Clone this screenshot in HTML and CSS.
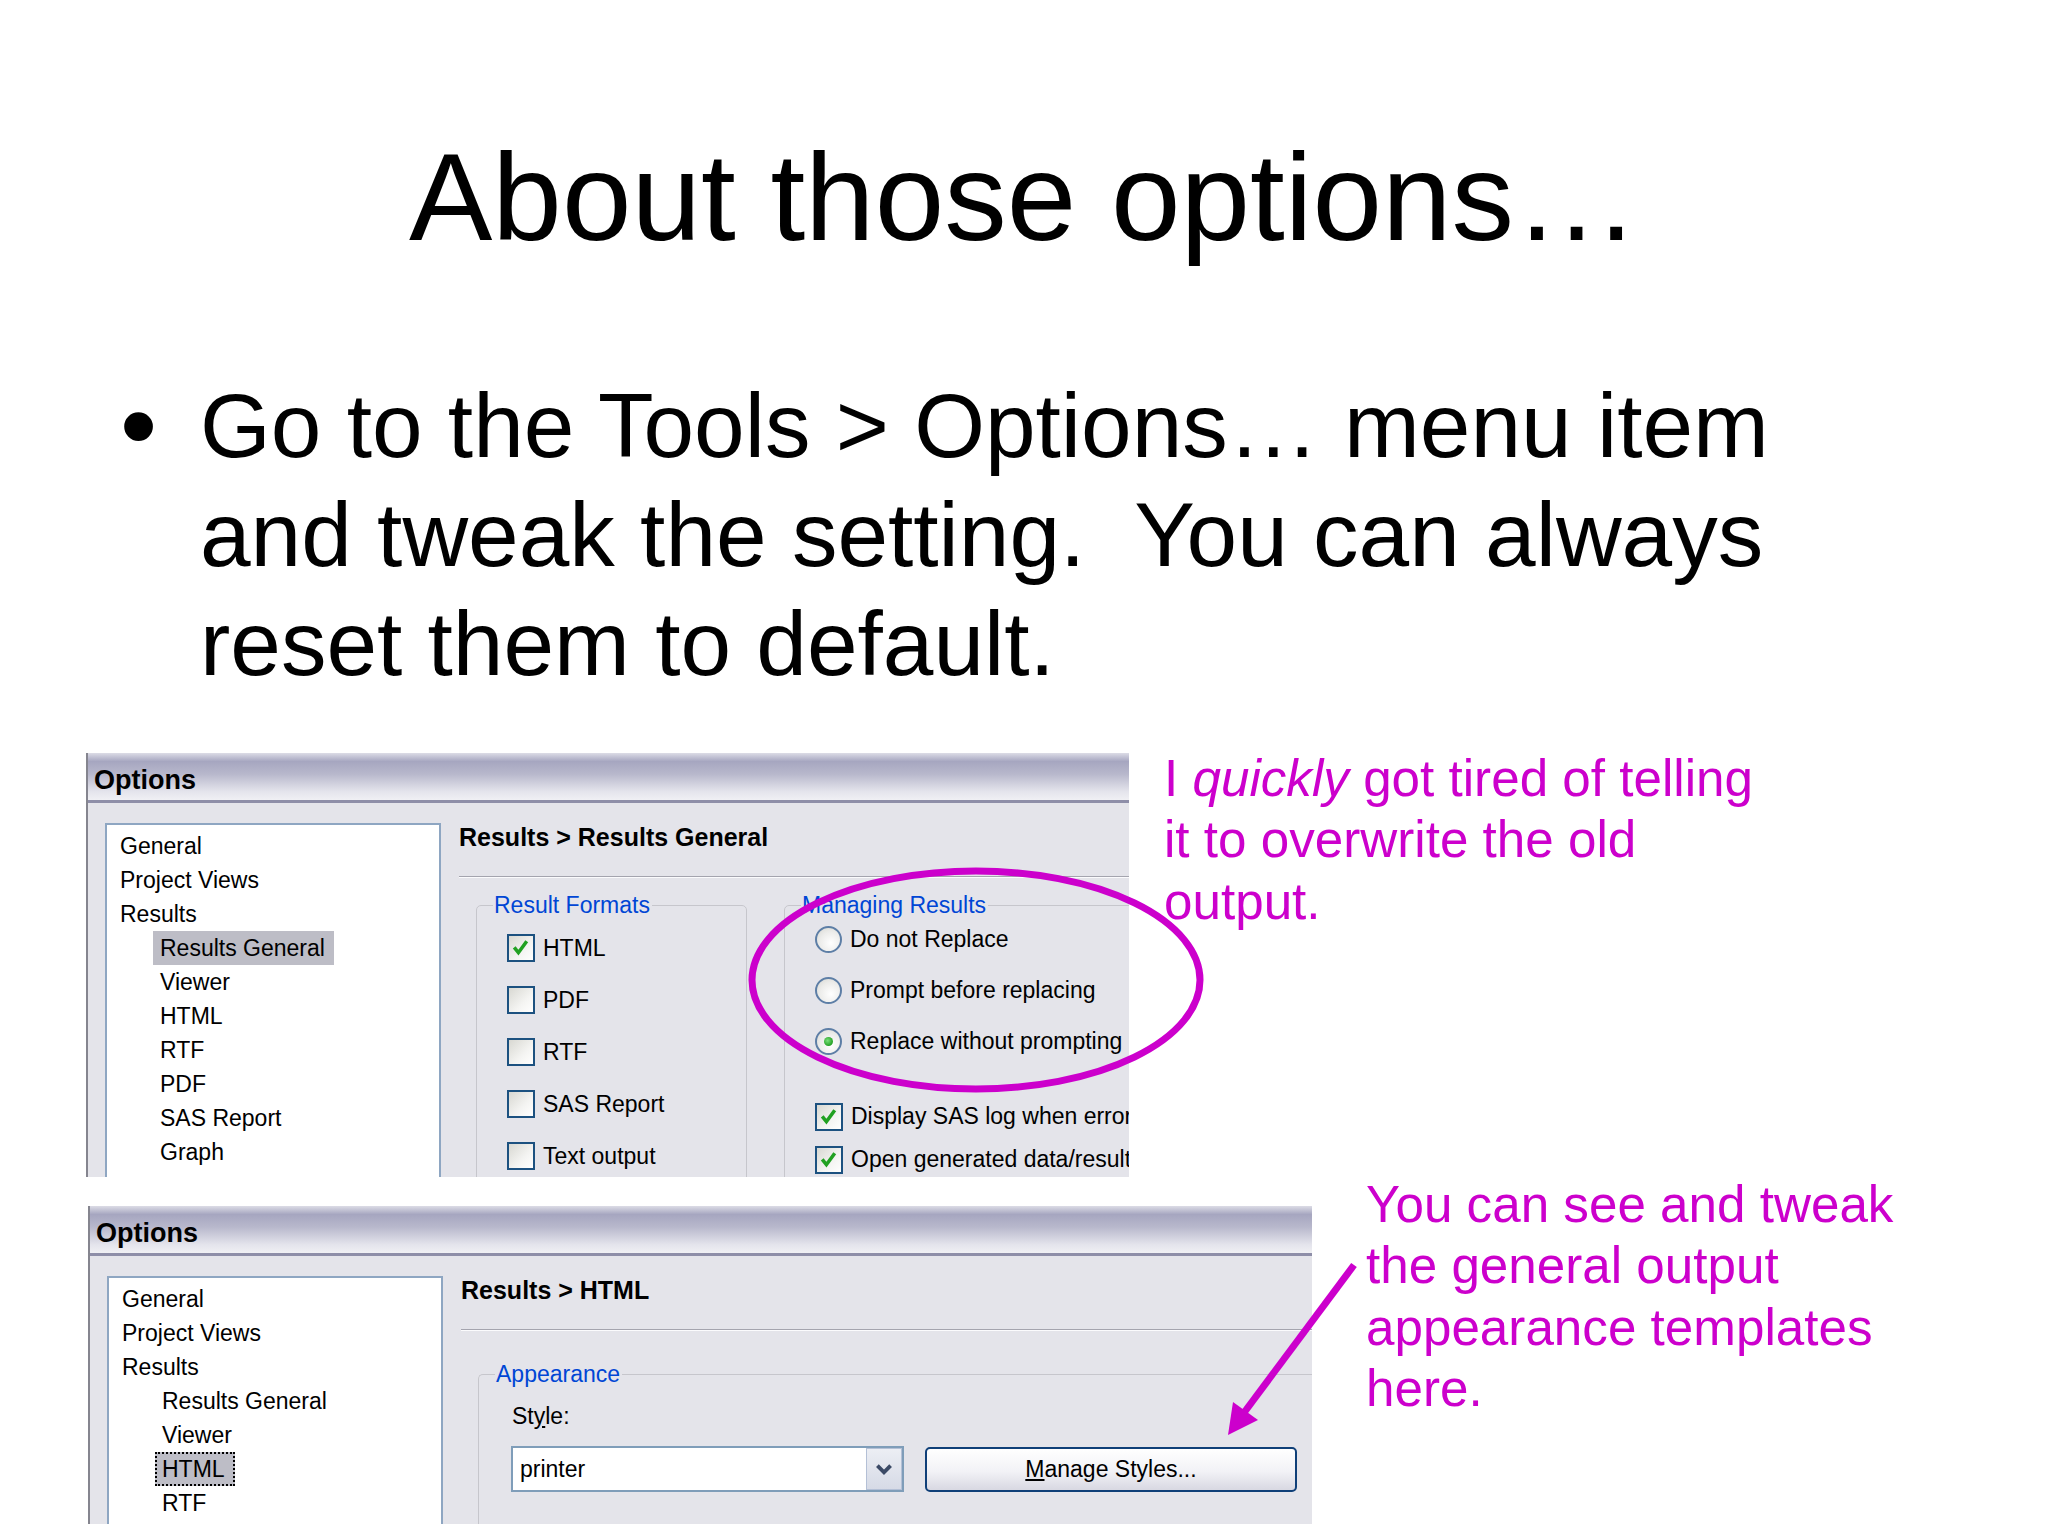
FILE: index.html
```html
<!DOCTYPE html>
<html lang="en">
<head>
  <meta charset="UTF-8" />
  <title>About those options…</title>
  <link rel="stylesheet" href="styles.css">
</head>
<body>

  <div class="slide">
    <h1 class="title">About those options…</h1>

    <ul class="bullets">
      <li><span class="dot">•</span><span>Go to the Tools &gt; Options… menu item<br>and tweak the setting.&nbsp; You can always<br>reset them to default.</span></li>
    </ul>

    <!-- first screenshot: Results General -->
    <div class="shot-row row-one">
      <div class="dialog dlg-general">
        <div class="titlebar">Options</div>
        <div class="dlg-body">
          <div class="tree">
            <div class="tree-item">General</div>
            <div class="tree-item">Project Views</div>
            <div class="tree-item">Results</div>
            <div class="tree-item sub"><span class="sel">Results General</span></div>
            <div class="tree-item sub">Viewer</div>
            <div class="tree-item sub">HTML</div>
            <div class="tree-item sub">RTF</div>
            <div class="tree-item sub">PDF</div>
            <div class="tree-item sub">SAS Report</div>
            <div class="tree-item sub">Graph</div>
          </div>
          <div class="pane">
            <div class="pane-head">Results &gt; Results General</div>
            <div class="sep"></div>
            <div class="groups">
              <fieldset class="group formats">
                <legend>Result Formats</legend>
                <div class="opt-list">
                  <div class="opt"><span class="check"><svg viewBox="0 0 23 23"><polyline points="5,11 9,16 17,5" /></svg></span>HTML</div>
                  <div class="opt"><span class="check"></span>PDF</div>
                  <div class="opt"><span class="check"></span>RTF</div>
                  <div class="opt"><span class="check"></span>SAS Report</div>
                  <div class="opt"><span class="check"></span>Text output</div>
                </div>
              </fieldset>
              <fieldset class="group managing">
                <legend>Managing Results</legend>
                <div class="radio-list">
                  <div class="opt"><span class="radio"></span>Do not Replace</div>
                  <div class="opt"><span class="radio"></span>Prompt before replacing</div>
                  <div class="opt"><span class="radio on"></span>Replace without prompting</div>
                </div>
                <div class="check-list">
                  <div class="opt"><span class="check"><svg viewBox="0 0 23 23"><polyline points="5,11 9,16 17,5" /></svg></span>Display SAS log when errors occur</div>
                  <div class="opt"><span class="check"><svg viewBox="0 0 23 23"><polyline points="5,11 9,16 17,5" /></svg></span>Open generated data/results</div>
                </div>
              </fieldset>
            </div>
          </div>
        </div>
      </div>
      <p class="note note-one">I <em>quickly</em> got tired of telling<br>it to overwrite the old<br>output.</p>
    </div>

    <!-- second screenshot: Results > HTML -->
    <div class="shot-row row-two">
      <div class="dialog dlg-html">
        <div class="titlebar">Options</div>
        <div class="dlg-body">
          <div class="tree">
            <div class="tree-item">General</div>
            <div class="tree-item">Project Views</div>
            <div class="tree-item">Results</div>
            <div class="tree-item sub">Results General</div>
            <div class="tree-item sub">Viewer</div>
            <div class="tree-item sub"><span class="sel focus">HTML</span></div>
            <div class="tree-item sub">RTF</div>
          </div>
          <div class="pane">
            <div class="pane-head">Results &gt; HTML</div>
            <div class="sep"></div>
            <fieldset class="group appearance">
              <legend>Appearance</legend>
              <div class="field-label">St<u>y</u>le:</div>
              <div class="field-row">
                <div class="combo">
                  <span class="combo-text">printer</span>
                  <span class="combo-btn"><svg viewBox="0 0 20 20"><polyline points="4,7 10,13 16,7" /></svg></span>
                </div>
                <div class="push-btn"><u>M</u>anage Styles...</div>
              </div>
            </fieldset>
          </div>
        </div>
      </div>
      <p class="note note-two">You can see and tweak<br>the general output<br>appearance templates<br>here.</p>
    </div>

    <svg class="marks" viewBox="0 0 2048 1536">
      <ellipse cx="976" cy="980" rx="224" ry="109" />
      <line x1="1354" y1="1265" x2="1243" y2="1414" />
      <polygon points="1228,1435 1233,1402 1258,1420" />
    </svg>
  </div>

</body>
</html>
```

FILE: styles.css
```css
body {
  margin: 0;
  background-color: white;
}

.slide {
  position: relative;
  width: 2048px;
  height: 1536px;
  overflow: hidden;
  font-family: 'Liberation Sans', Arial, sans-serif;
  color: #000;
}

.title {
  margin: 122px 0 0;
  font-size: 125px;
  font-weight: normal;
  line-height: 150px;
  text-align: center;
}

.bullets {
  list-style: none;
  margin: 99px 0 0;
  padding: 0 0 0 120px;
  font-size: 91px;
  line-height: 109px;
}

.bullets li {
  display: flex;
}

.bullets .dot {
  width: 80px;
  flex-shrink: 0;
  font-size: 106px;
}

.shot-row {
  display: flex;
  align-items: flex-start;
}

.row-one {
  margin-top: 50px;
}

.row-two {
  margin-top: -3px;
}

.note {
  margin: 0;
  font-size: 51.2px;
  line-height: 61.4px;
  color: #cc00cc;
  white-space: nowrap;
}

.note-one {
  margin-left: 35px;
}

.note-two {
  margin-left: 54px;
}

/* dialog screenshots */
.dialog {
  display: flex;
  flex-direction: column;
  overflow: hidden;
  box-sizing: border-box;
  border-left: 2px solid #85858f;
  background-color: #e4e4ea;
  font-size: 23px;
}

.dlg-general {
  margin: 5px 0 0 86px;
  width: 1043px;
  height: 424px;
}

.dlg-html {
  margin: 32px 0 0 88px;
  width: 1224px;
  height: 318px;
}

.titlebar {
  height: 50px;
  box-sizing: border-box;
  padding: 5px 0 0 6px;
  line-height: 45px;
  font-size: 27px;
  font-weight: bold;
  border-bottom: 3px solid #8e8ea8;
  background: linear-gradient(to bottom, #dcdce6 0%, #a6a6c0 18%, #b8b8cc 45%, #e4e4ec 82%, #f0f0f4 100%);
  flex-shrink: 0;
}

.dlg-body {
  flex: 1;
  display: flex;
  gap: 18px;
  padding-left: 17px;
  min-height: 0;
}

.tree {
  width: 336px;
  box-sizing: border-box;
  margin-top: 20px;
  padding: 4px 0 0 13px;
  background-color: white;
  border: 2px solid #8ea6c2;
  border-bottom: none;
  flex-shrink: 0;
}

.tree-item {
  height: 34px;
  line-height: 34px;
  white-space: nowrap;
}

.tree-item.sub {
  padding-left: 40px;
}

.sel {
  display: inline-block;
  height: 34px;
  box-sizing: border-box;
  margin-left: -7px;
  padding: 0 9px 0 7px;
  background-color: #bdbdc6;
}

.sel.focus {
  border: 2px dotted #000;
  line-height: 30px;
  padding: 0 8px 0 5px;
}

.pane {
  flex: 1;
  min-width: 0;
  padding-top: 17px;
}

.pane-head {
  height: 34px;
  line-height: 34px;
  font-size: 25px;
  font-weight: bold;
  white-space: nowrap;
}

.sep {
  margin-top: 22px;
  border-top: 1px solid #a4a4ae;
  border-bottom: 1px solid #fbfbfd;
}

.groups {
  display: flex;
  gap: 37px;
  margin-top: 10px;
  padding-left: 17px;
}

.group {
  margin: 0;
  padding: 0 0 0 16px;
  border: 1px solid #c6c6cc;
  border-radius: 5px;
  min-height: 400px;
  flex-shrink: 0;
}

.group legend {
  padding: 0 2px 0 1px;
  height: 34px;
  line-height: 34px;
  color: #0046d5;
}

.formats {
  width: 271px;
  box-sizing: border-box;
}

.managing {
  width: 560px;
  box-sizing: border-box;
}

.opt-list,
.radio-list,
.check-list {
  padding-left: 14px;
}

.opt {
  display: flex;
  align-items: center;
  gap: 8px;
  height: 52px;
  white-space: nowrap;
}

.radio-list {
  margin-top: -8px;
}

.radio-list .opt {
  height: 51px;
}

.check-list {
  margin-top: 28px;
}

.check-list .opt {
  height: 43px;
}

.check {
  width: 28px;
  height: 28px;
  box-sizing: border-box;
  border: 2px solid #1c5180;
  background: linear-gradient(135deg, #d8d8d2 0%, #f4f4f2 60%, #ffffff 100%);
  flex-shrink: 0;
}

.check svg {
  display: block;
  width: 24px;
  height: 24px;
  fill: none;
  stroke: #21a121;
  stroke-width: 3.4;
}

.radio {
  width: 27px;
  height: 27px;
  box-sizing: border-box;
  border-radius: 50%;
  border: 2px solid #5d7ea6;
  background: radial-gradient(circle at 60% 65%, #ffffff 0%, #ececea 55%, #d6d6d0 100%);
  flex-shrink: 0;
  position: relative;
}

.radio.on::after {
  content: "";
  position: absolute;
  left: 7px;
  top: 7px;
  width: 9px;
  height: 9px;
  border-radius: 50%;
  background: radial-gradient(circle at 40% 40%, #7be07b 0%, #23a023 70%);
}

.appearance {
  margin-top: 26px;
  margin-left: 17px;
  border-right: none;
  border-top-right-radius: 0;
  border-bottom-right-radius: 0;
}

.field-label {
  margin-top: 8px;
  padding-left: 17px;
  height: 34px;
  line-height: 34px;
}

.field-row {
  display: flex;
  align-items: flex-start;
  margin-top: 13px;
  padding-left: 16px;
}

.combo {
  display: flex;
  width: 393px;
  height: 46px;
  box-sizing: border-box;
  border: 2px solid #7f9db9;
  background-color: white;
}

.combo-text {
  flex: 1;
  padding-left: 7px;
  line-height: 42px;
}

.combo-btn {
  width: 36px;
  box-sizing: border-box;
  border: 1px solid #b4c0d6;
  background: linear-gradient(to bottom, #eceef4 0%, #d6dae6 100%);
}

.combo-btn svg {
  display: block;
  width: 22px;
  height: 22px;
  margin: 9px auto 0;
  fill: none;
  stroke: #3b4a66;
  stroke-width: 3.5;
}

.push-btn {
  width: 372px;
  height: 45px;
  box-sizing: border-box;
  margin: 1px 0 0 21px;
  border: 2px solid #0f3f78;
  border-radius: 5px;
  background: linear-gradient(to bottom, #ffffff 0%, #f2f2f6 55%, #d8d8e2 100%);
  text-align: center;
  line-height: 41px;
}

/* annotations drawn over the screenshots */
.marks {
  position: absolute;
  left: 0;
  top: 0;
  width: 2048px;
  height: 1536px;
  pointer-events: none;
}

.marks ellipse {
  fill: none;
  stroke: #cc00cc;
  stroke-width: 7;
}

.marks line {
  stroke: #cc00cc;
  stroke-width: 7;
}

.marks polygon {
  fill: #cc00cc;
}
```
